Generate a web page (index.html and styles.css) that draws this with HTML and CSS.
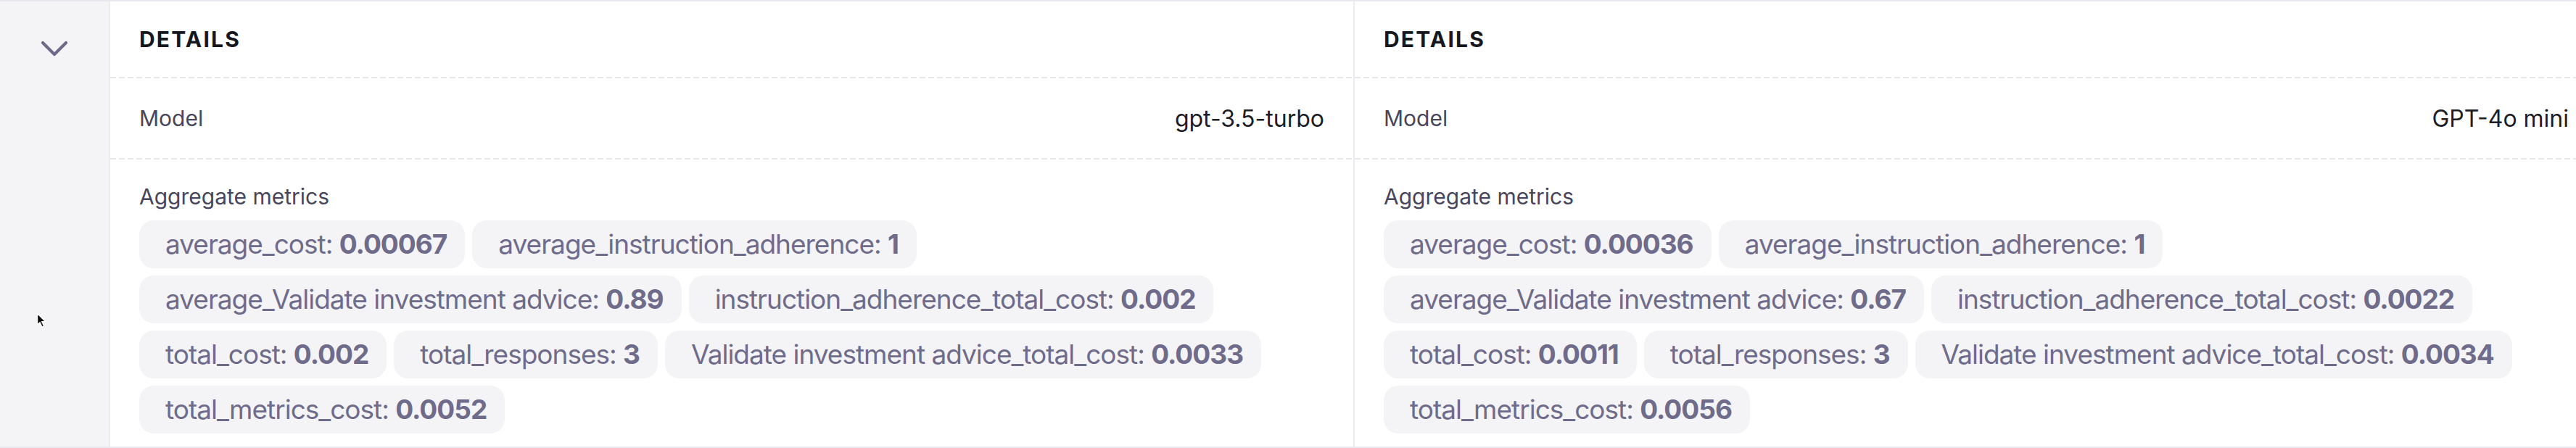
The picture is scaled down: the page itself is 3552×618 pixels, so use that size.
FILE: index.html
```html
<!DOCTYPE html>
<html lang="en">
<head>
<meta charset="utf-8">
<title>Details comparison</title>
<link rel="stylesheet" href="styles.css">
</head>
<body>
<div class="page">
  <aside class="gutter">
    <svg class="chevron" width="38" height="24" viewBox="0 0 38 24" aria-hidden="true">
      <path d="M3 3 L19 19 L35 3" fill="none" stroke="currentColor" stroke-width="4.2" stroke-linecap="round" stroke-linejoin="round"/>
    </svg>
  </aside>

  <section class="col">
    <div class="row head"><h2 class="title">DETAILS</h2></div>
    <div class="row kv">
      <span class="label">Model</span>
      <span class="value">gpt-3.5-turbo</span>
    </div>
    <div class="row metrics">
      <div class="label metrics-label">Aggregate metrics</div>
      <div class="chips">
        <span class="chip">average_cost: <b>0.00067</b></span>
        <span class="chip">average_instruction_adherence: <b>1</b></span>
        <span class="chip">average_Validate investment advice: <b>0.89</b></span>
        <span class="chip">instruction_adherence_total_cost: <b>0.002</b></span>
        <span class="chip">total_cost: <b>0.002</b></span>
        <span class="chip">total_responses: <b>3</b></span>
        <span class="chip">Validate investment advice_total_cost: <b>0.0033</b></span>
        <span class="chip">total_metrics_cost: <b>0.0052</b></span>
      </div>
    </div>
  </section>

  <section class="col">
    <div class="row head"><h2 class="title">DETAILS</h2></div>
    <div class="row kv">
      <span class="label">Model</span>
      <span class="value">GPT-4o mini</span>
    </div>
    <div class="row metrics">
      <div class="label metrics-label">Aggregate metrics</div>
      <div class="chips">
        <span class="chip">average_cost: <b>0.00036</b></span>
        <span class="chip">average_instruction_adherence: <b>1</b></span>
        <span class="chip">average_Validate investment advice: <b>0.67</b></span>
        <span class="chip">instruction_adherence_total_cost: <b>0.0022</b></span>
        <span class="chip">total_cost: <b>0.0011</b></span>
        <span class="chip">total_responses: <b>3</b></span>
        <span class="chip">Validate investment advice_total_cost: <b>0.0034</b></span>
        <span class="chip">total_metrics_cost: <b>0.0056</b></span>
      </div>
    </div>
  </section>

  <svg class="cursor" width="16" height="22" viewBox="0 0 16 22" aria-hidden="true">
    <path d="M1.5 1.5 L1.5 17 L5 13.6 L8 20 L10.6 18.8 L7.7 12.6 L12.6 12.6 Z" fill="#111" stroke="#fff" stroke-width="1.3" stroke-linejoin="round"/>
  </svg>
</div>
</body>
</html>
```

FILE: styles.css
```css
* {
  box-sizing: border-box;
}

html,
body {
  margin: 0;
  padding: 0;
  overflow: hidden;
  background: #ffffff;
}

body {
  font-family: Inter, "Noto Sans", "Liberation Sans", sans-serif;
  color: #1d1d25;
}

.page {
  position: relative;
  display: flex;
  width: max-content;
  border-top: 2px solid #e8e8ee;
  border-bottom: 2px solid #e8e8ee;
}

.gutter {
  flex: 0 0 152px;
  background: #f4f4f7;
  border-right: 2px solid #ebebf0;
  display: flex;
  justify-content: center;
  align-items: flex-start;
  padding-top: 54px;
}

.chevron {
  display: block;
  color: #6d6989;
}

.col {
  flex: 0 0 1716px;
  border-right: 2px solid #ebebf0;
  display: flex;
  flex-direction: column;
}

.row {
  padding: 0 40px;
}

.head,
.kv {
  background: repeating-linear-gradient(to right, #e6e6eb 0 8px, transparent 8px 12px) left bottom / 100% 2px no-repeat;
}

.head {
  height: 106px;
  display: flex;
  align-items: center;
  padding-bottom: 2px;
}

.title {
  margin: 0;
  font-size: 30px;
  line-height: 45px;
  font-weight: 700;
  letter-spacing: 2.2px;
  color: #17171e;
}

.kv {
  height: 112px;
  display: flex;
  align-items: center;
  justify-content: space-between;
  padding-bottom: 2px;
}

.label {
  font-size: 30px;
  line-height: 45px;
  color: #47465b;
}

.value {
  font-size: 32px;
  line-height: 45px;
  color: #1d1d25;
}

.metrics {
  padding-top: 29px;
  padding-bottom: 18px;
}

.metrics-label {
  margin-bottom: 10px;
}

.chips {
  display: flex;
  flex-wrap: wrap;
  gap: 10px 10px;
}

.chip {
  display: inline-block;
  height: 66px;
  line-height: 66px;
  padding: 0 25px 0 36px;
  border-radius: 20px;
  background: #f4f4f7;
  color: #6f6b8b;
  font-size: 37px;
  letter-spacing: -1px;
  white-space: nowrap;
}

.chip b {
  font-weight: 700;
}

.cursor {
  position: absolute;
  left: 50px;
  top: 429px;
}
```
